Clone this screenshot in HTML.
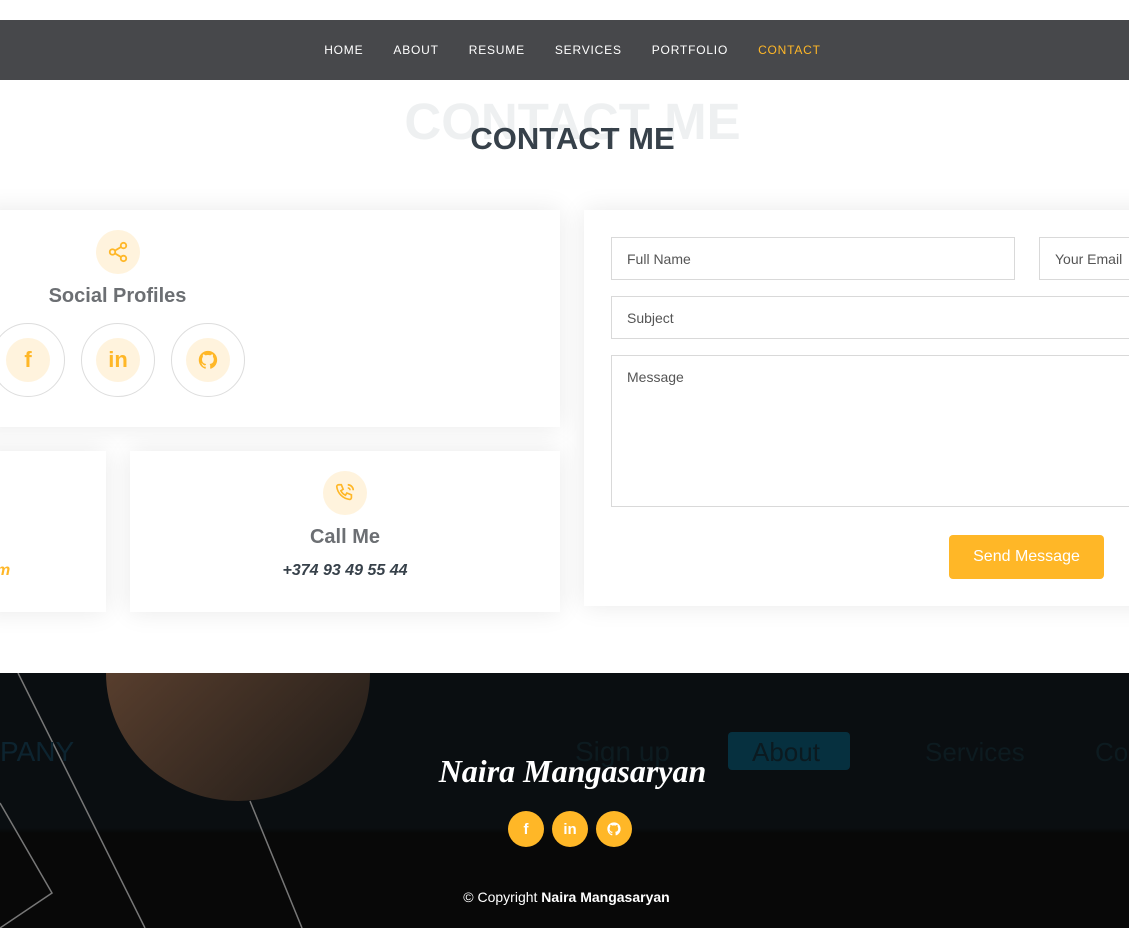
<!DOCTYPE html>
<html><head><meta charset="utf-8"><style>
*{box-sizing:border-box;margin:0;padding:0}
body{width:1129px;height:928px;overflow:hidden;background:#fff;font-family:"Liberation Sans",sans-serif;position:relative}
.nav{position:absolute;top:20px;left:0;width:1129px;height:60px;background:#47484b;display:flex;justify-content:center;align-items:center;gap:30px;padding-left:16px}
.nav a{color:#fff;font-size:12px;letter-spacing:.8px;text-decoration:none;font-weight:500}
.nav a.act{color:#ffb727}
.bgt{position:absolute;top:92px;left:0;width:1145px;text-align:center;font-size:51px;font-weight:bold;color:#eef0f1}
.t{position:absolute;top:121px;left:0;width:1145px;text-align:center;font-size:31px;font-weight:bold;color:#37414a}
.card{position:absolute;background:#fff;box-shadow:0 0 24px rgba(0,0,0,.09)}
.ic{position:absolute;width:44px;height:44px;border-radius:50%;background:#fff3dd;display:flex;align-items:center;justify-content:center}
h3{position:absolute;font-size:20px;color:#6c6f73;font-weight:bold;text-align:center}
.soc{position:absolute;width:74px;height:74px;border:1px solid #ddd;border-radius:50%;}
.soc div{position:absolute;left:14px;top:14px;width:44px;height:44px;border-radius:50%;background:#fff3dd;color:#ffb727;font-weight:bold;font-size:22px;display:flex;align-items:center;justify-content:center}
.in{position:absolute;border:1px solid #d9d9d9;font-size:14px;color:#555;padding:13px 15px}
.btn{position:absolute;left:949px;top:535px;width:155px;height:44px;background:#ffb727;color:#fff;font-size:16px;border-radius:4px;display:flex;align-items:center;justify-content:center}
.foot{position:absolute;top:673px;left:0;width:1129px;height:255px;background:linear-gradient(#0a0e11 0,#0a0e11 155px,#080808 160px)}
.fs{position:absolute;top:811px;width:36px;height:36px;border-radius:50%;background:#ffb727;color:#fff;font-weight:bold;font-size:15px;display:flex;align-items:center;justify-content:center}
</style></head><body>
<div class="nav"><a>HOME</a><a>ABOUT</a><a>RESUME</a><a>SERVICES</a><a>PORTFOLIO</a><a class="act">CONTACT</a></div>
<div class="bgt">CONTACT ME</div>
<div class="t">CONTACT ME</div>

<div class="card" style="left:-20px;top:210px;width:580px;height:217px"></div>
<div class="ic" style="left:96px;top:230px"><svg width="22" height="22" viewBox="0 0 24 24" fill="none" stroke="#ffb727" stroke-width="2"><circle cx="18" cy="5" r="3"/><circle cx="6" cy="12" r="3"/><circle cx="18" cy="19" r="3"/><path d="M8.6 13.5l6.8 4M15.4 6.5l-6.8 4"/></svg></div>
<h3 style="left:0;top:285px;width:235px">Social Profiles</h3>
<div class="soc" style="left:-9px;top:323px"><div>f</div></div>
<div class="soc" style="left:81px;top:323px"><div>in</div></div>
<div class="soc" style="left:171px;top:323px"><div><svg width="22" height="22" viewBox="0 0 24 24" fill="#ffb727"><path d="M12 2a10 10 0 0 0-3.2 19.5c.5.1.7-.2.7-.5v-1.8c-2.8.6-3.4-1.3-3.4-1.3-.4-1.2-1.1-1.5-1.1-1.5-.9-.6.1-.6.1-.6 1 .1 1.5 1 1.5 1 .9 1.5 2.3 1.1 2.9.8.1-.6.3-1.1.6-1.3-2.2-.3-4.6-1.1-4.6-5 0-1.1.4-2 1-2.7-.1-.3-.4-1.3.1-2.7 0 0 .8-.3 2.8 1a9.5 9.5 0 0 1 5 0c1.9-1.3 2.8-1 2.8-1 .5 1.4.2 2.4.1 2.7.6.7 1 1.6 1 2.7 0 3.9-2.3 4.7-4.6 5 .4.3.7.9.7 1.9V21c0 .3.2.6.7.5A10 10 0 0 0 12 2z"/></svg></div></div>

<div class="card" style="left:-20px;top:451px;width:126px;height:161px"></div>
<div style="position:absolute;left:-4px;top:562px;color:#ffb727;font-style:italic;font-weight:bold;font-size:16px">m</div>
<div class="card" style="left:130px;top:451px;width:430px;height:161px"></div>
<div class="ic" style="left:323px;top:471px"><svg width="22" height="22" viewBox="0 0 24 24" fill="none" stroke="#ffb727" stroke-width="1.8"><path d="M5 3h3l2 5-2.5 1.5a11 11 0 0 0 5 5L14 12l5 2v3a2 2 0 0 1-2 2A16 16 0 0 1 3 5a2 2 0 0 1 2-2z"/><path d="M15 3a6 6 0 0 1 6 6M15 6.5a2.5 2.5 0 0 1 2.5 2.5"/></svg></div>
<h3 style="left:130px;top:526px;width:430px">Call Me</h3>
<div style="position:absolute;left:130px;top:562px;width:430px;text-align:center;font-size:16px;font-weight:bold;font-style:italic;color:#37414a">+374 93 49 55 44</div>

<div class="card" style="left:584px;top:210px;width:580px;height:396px"></div>
<div class="in" style="left:611px;top:237px;width:404px;height:43px">Full Name</div>
<div class="in" style="left:1039px;top:237px;width:120px;height:43px">Your Email</div>
<div class="in" style="left:611px;top:296px;width:540px;height:43px">Subject</div>
<div class="in" style="left:611px;top:355px;width:540px;height:152px">Message</div>
<div class="btn">Send Message</div>

<div class="foot">
<svg width="1129" height="255" style="position:absolute;left:0;top:0">
<defs><linearGradient id="g" x1="0" y1="0" x2="1" y2="1"><stop offset="0" stop-color="#6b4a35"/><stop offset="1" stop-color="#1e1a17"/></linearGradient></defs>
<ellipse cx="238" cy="0" rx="132" ry="128" fill="url(#g)"/>
<path d="M18 0L145 255M250 128L302 255M0 130L52 220L0 255" stroke="#777" stroke-width="1.5" fill="none"/>
<text x="0" y="88" font-size="28" fill="#0d2430" font-family="Liberation Sans">PANY</text>
<text x="575" y="88" font-size="28" fill="#0d1b20" font-family="Liberation Sans">Sign up</text>
<rect x="728" y="59" width="122" height="38" rx="4" fill="#06303f"/>
<text x="752" y="88" font-size="26" fill="#0b1a20" font-family="Liberation Sans">About</text>
<text x="925" y="88" font-size="26" fill="#0d1b20" font-family="Liberation Sans">Services</text>
<text x="1095" y="88" font-size="26" fill="#0d1b20" font-family="Liberation Sans">Co</text>
</svg>
<div style="position:absolute;left:0;top:80px;width:1145px;text-align:center;color:#fff;font-size:32px;font-style:italic;font-weight:bold;font-family:'Liberation Serif',serif">Naira Mangasaryan</div>
<div style="position:absolute;left:-6px;top:216px;width:1145px;text-align:center;color:#fff;font-size:14px">© Copyright <b>Naira Mangasaryan</b></div>
</div>
<div class="fs" style="left:508px">f</div>
<div class="fs" style="left:552px">in</div>
<div class="fs" style="left:596px"><svg width="16" height="16" viewBox="0 0 24 24" fill="#fff"><path d="M12 2a10 10 0 0 0-3.2 19.5c.5.1.7-.2.7-.5v-1.8c-2.8.6-3.4-1.3-3.4-1.3-.4-1.2-1.1-1.5-1.1-1.5-.9-.6.1-.6.1-.6 1 .1 1.5 1 1.5 1 .9 1.5 2.3 1.1 2.9.8.1-.6.3-1.1.6-1.3-2.2-.3-4.6-1.1-4.6-5 0-1.1.4-2 1-2.7-.1-.3-.4-1.3.1-2.7 0 0 .8-.3 2.8 1a9.5 9.5 0 0 1 5 0c1.9-1.3 2.8-1 2.8-1 .5 1.4.2 2.4.1 2.7.6.7 1 1.6 1 2.7 0 3.9-2.3 4.7-4.6 5 .4.3.7.9.7 1.9V21c0 .3.2.6.7.5A10 10 0 0 0 12 2z"/></svg></div>
</body></html>
